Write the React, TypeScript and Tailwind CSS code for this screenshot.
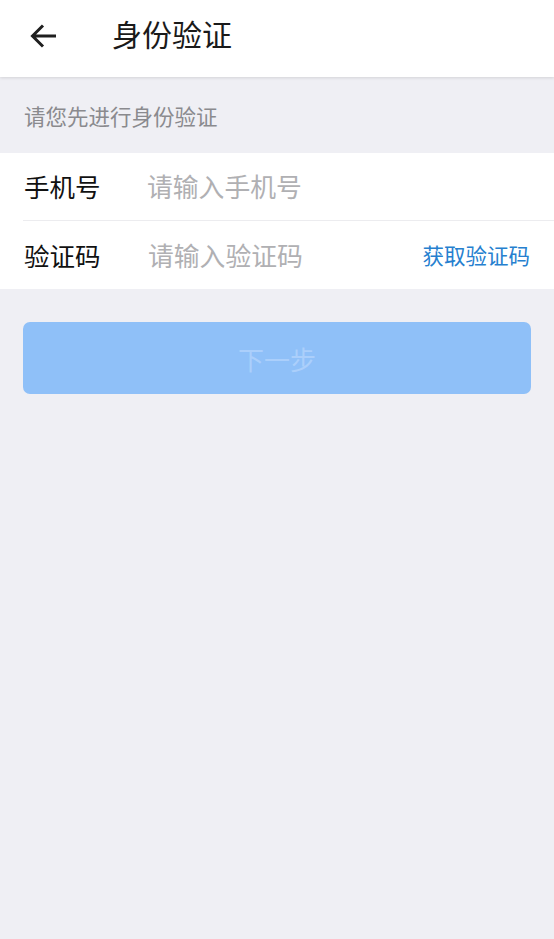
const font = { fontFamily: '"Noto Sans CJK SC", "Noto Sans", sans-serif' };

const App = () => {
  return (
    <div className="min-h-[939px] bg-[#efeff4]" style={font}>
      {/* Header */}
      <header className="relative z-10 flex h-[77px] items-center pb-[6px] bg-white shadow-[0_1px_3px_rgba(0,0,0,0.12)]">
        <button className="ml-[29px] flex h-[30px] w-[30px] items-center justify-center">
          <svg width="28" height="26" viewBox="0 0 28 26" fill="none">
            <path d="M26 13H3M13 2.5L2.5 13L13 23.5" stroke="#1f1f1f" strokeWidth="3" />
          </svg>
        </button>
        <h1 className="ml-[53px] mb-[6px] text-[30px] leading-none text-[#1a1a1a]">身份验证</h1>
      </header>

      {/* Hint */}
      <p className="px-6 pt-[26px] pb-[24px] text-[21.5px] leading-[26px] text-[#8a8a8e]">
        请您先进行身份验证
      </p>

      {/* Form */}
      <div className="bg-white">
        <div className="flex h-[68px] items-center border-b border-[#ececef] ml-[23px]">
          <span className="w-[124px] pl-[1px] text-[25.5px] text-[#111]">手机号</span>
          <span className="text-[25.8px] text-[#b0b0b3]">请输入手机号</span>
        </div>
        <div className="flex h-[68px] items-center pl-6 pr-6">
          <span className="w-[124px] text-[25.5px] text-[#111]">验证码</span>
          <span className="flex-1 text-[25.8px] text-[#b0b0b3]">请输入验证码</span>
          <span className="text-[21.5px] text-[#2680cf]">获取验证码</span>
        </div>
      </div>

      {/* Next */}
      <div className="px-[23px] pt-[33px]">
        <button className="flex h-[72px] w-full items-center justify-center rounded-[7px] bg-[#8fc0f8] text-[26px] text-[#abcffb]">
          下一步
        </button>
      </div>
    </div>
  );
};

export default App;
